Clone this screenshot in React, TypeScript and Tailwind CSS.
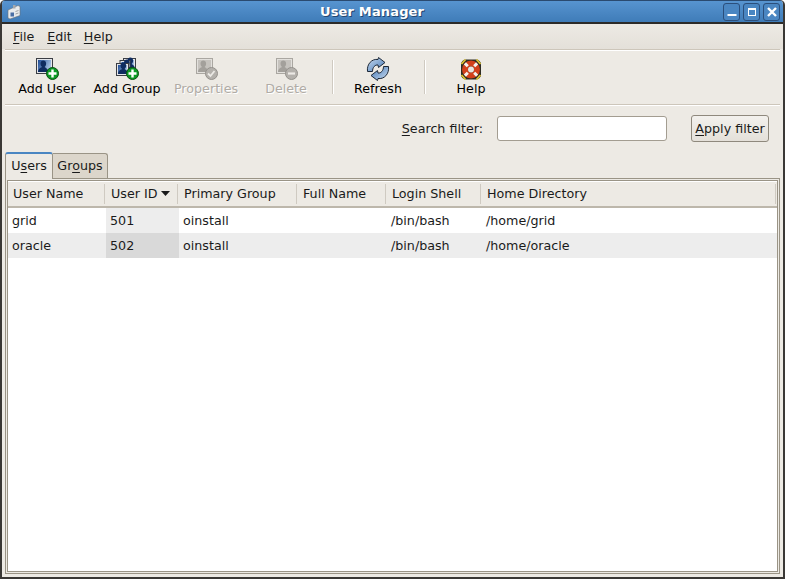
import React from "react";

const columns = [
  { label: "User Name", w: "w-[98px]" },
  { label: "User ID", w: "w-[73px]", sorted: true },
  { label: "Primary Group", w: "w-[119px]" },
  { label: "Full Name", w: "w-[89px]" },
  { label: "Login Shell", w: "w-[95px]" },
  { label: "Home Directory", w: "flex-1" },
];

const rows = [
  ["grid", "501", "oinstall", "", "/bin/bash", "/home/grid"],
  ["oracle", "502", "oinstall", "", "/bin/bash", "/home/oracle"],
];

function Mnemonic({ text, at }: { text: string; at: number }) {
  return (
    <span>
      {text.slice(0, at)}
      <span className="underline underline-offset-2">{text[at]}</span>
      {text.slice(at + 1)}
    </span>
  );
}

function Card({ gray, x = 0, y = 0, w = 16, h = 15 }: { gray?: boolean; x?: number; y?: number; w?: number; h?: number }) {
  return (
    <g transform={`translate(${x} ${y})`}>
      <rect x="0.500" y="0.500" width={w} height={h} fill={gray ? "#e2e0dc" : "#e4e6ea"} stroke={gray ? "#aaa7a1" : "#3b3e44"} />
      <rect x="2" y="2" width={w - 3} height={h - 3} fill={gray ? "#c6c3be" : "url(#cardBlue)"} />
      <path
        d={`M2 ${h - 1}c0-3 2-4 4-5-1-1-1.500-2-1.500-3.500 0-2 1.200-3 2.800-3s2.800 1 2.800 3c0 1.500-.5 2.500-1.500 3.500 1.500 1 3.400 2 3.400 5z`}
        fill={gray ? "#a3a09b" : "#0f2c60"}
      />
    </g>
  );
}

function Badge({ gray, kind }: { gray?: boolean; kind: "plus" | "check" | "minus" }) {
  return (
    <g>
      <circle cx="17.500" cy="16.500" r="6" fill={gray ? "#b4b1ac" : "#0c9a24"} stroke={gray ? "#94918c" : "#0a4f12"} />
      {kind === "plus" && <path d="M17.500 12.500v8M13.500 16.500h8" stroke="#fff" strokeWidth="2.400" />}
      {kind === "check" && <path d="M14 16.500l2.500 2.500 4-5" stroke="#eceae6" strokeWidth="1.800" fill="none" />}
      {kind === "minus" && <path d="M14 16.500h7" stroke="#eceae6" strokeWidth="2.200" />}
    </g>
  );
}

function UserIcon({ kind, gray, group }: { kind: "plus" | "check" | "minus"; gray?: boolean; group?: boolean }) {
  return (
    <svg width="24" height="24" viewBox="0 0 24 24" className="block">
      <defs>
        <linearGradient id="cardBlue" x1="0" y1="0" x2="1" y2="0.400">
          <stop offset="0" stopColor="#1c4a94" />
          <stop offset="1" stopColor="#a9c3e4" />
        </linearGradient>
      </defs>
      {group ? (
        <>
          <Card x={8} y={1} w={12} h={12} />
          <Card x={4.500} y={3} w={10} h={12} />
          <Card x={1} y={6} w={12} h={12} />
        </>
      ) : (
        <Card gray={gray} x={gray ? 2 : 1} y={1} />
      )}
      <Badge gray={gray} kind={kind} />
    </svg>
  );
}

function RefreshIcon() {
  const arrow = "M1.500 14.500C0.500 7 6 1.500 12 2.500L12.500 0.500 19 5.500 12.500 10.500 12 8C9 7.500 6.500 10.500 6.500 14.500Z";
  return (
    <svg width="24" height="24" viewBox="0 0 24 24" className="block">
      <defs>
        <linearGradient id="arrowBlue" x1="0" y1="0" x2="1" y2="1">
          <stop offset="0" stopColor="#cfe0f2" />
          <stop offset="1" stopColor="#3f74b4" />
        </linearGradient>
      </defs>
      <path d={arrow} fill="url(#arrowBlue)" stroke="#1c2838" strokeLinejoin="round" />
      <path d={arrow} transform="rotate(180 12 12)" fill="url(#arrowBlue)" stroke="#1c2838" strokeLinejoin="round" />
    </svg>
  );
}

function HelpIcon() {
  return (
    <svg width="24" height="24" viewBox="0 0 24 24" className="block">
      <rect x="2" y="2.500" width="20" height="20" rx="5" fill="#2e2c22" />
      <path d="M2.500 7l4-4.500M21.500 7l-4-4.500M2.500 18l4 4.500M21.500 18l-4 4.500" stroke="#dcc22c" strokeWidth="1.800" />
      <circle cx="12" cy="12.500" r="6" fill="none" stroke="#d2401a" strokeWidth="6" />
      <path
        d="M8.800 9.300L5.900 6.400M15.200 9.300l2.900-2.900M8.800 15.700l-2.900 2.900M15.200 15.700l2.900 2.900"
        stroke="#f5f2ed"
        strokeWidth="3"
      />
      <circle cx="12" cy="12.500" r="3" fill="#e9e6e0" />
    </svg>
  );
}

function ToolButton({
  label,
  icon,
  width,
  disabled,
}: {
  label: string;
  icon: React.ReactNode;
  width: string;
  disabled?: boolean;
}) {
  return (
    <div className={`${width} flex flex-col items-center shrink-0`}>
      <div className="h-[24px] w-[24px]">{icon}</div>
      <div
        className={`text-[12.700px] leading-[16px] whitespace-nowrap ${
          disabled ? "text-[#b0aca6] [text-shadow:1px_1px_0_#fff]" : "text-black"
        }`}
      >
        {label}
      </div>
    </div>
  );
}

function WinButton({ children }: { children: React.ReactNode }) {
  return (
    <div className="w-[17px] h-[18px] rounded-[3px] border border-[#2b4f7c] bg-[#4a86c2] flex items-center justify-center">
      <svg width="12" height="12" viewBox="0 0 12 12" className="block">
        {children}
      </svg>
    </div>
  );
}

export default function App() {
  return (
    <div
      className="w-[785px] h-[579px] overflow-hidden flex flex-col bg-[#edeae4] text-[12.700px] text-[#1a1a1a] border-x-2 border-b-2 border-[#3a3835] rounded-t-[5px]"
      style={{ fontFamily: '"DejaVu Sans", sans-serif' }}
    >
      {/* title bar */}
      <div className="relative -mx-[2px] h-[24px] shrink-0 flex items-center bg-gradient-to-b from-[#5794d0] to-[#3f7cb8] border-t border-b-2 border-t-[#2a4a70] border-b-[#2c2b29]">
        <svg width="16" height="16" viewBox="0 0 16 16" className="block ml-[6px]">
          <path d="M2 6l10-4.500 2 1v9l-10 3.500-2-1z" fill="#e8ebed" stroke="#6a6f75" strokeWidth="0.600" />
          <rect x="4.500" y="8.500" width="3.500" height="4" fill="#4a6fa5" />
          <path d="M9.500 7.500l3-1M9.500 10l3-1" stroke="#8a8d90" strokeWidth="0.800" />
          <rect x="7" y="1" width="2.500" height="3.500" fill="#a5a8ab" />
        </svg>
        <div className="absolute left-[320px] top-[3px] text-white font-bold text-[13px] leading-[16px] tracking-[0.150px] [text-shadow:1px_1px_0_#23476f]">
          User Manager
        </div>
        <div className="ml-auto mr-[5px] flex gap-[3px]">
          <WinButton>
            <rect x="1.500" y="8" width="9" height="2" fill="#fff" />
          </WinButton>
          <WinButton>
            <rect x="2.500" y="2.500" width="7" height="7" fill="none" stroke="#fff" />
            <rect x="2" y="2" width="8" height="2" fill="#fff" />
          </WinButton>
          <WinButton>
            <path d="M2 2l8 8M10 2l-8 8" stroke="#fff" strokeWidth="2.400" />
          </WinButton>
        </div>
      </div>

      {/* menu bar */}
      <div className="h-[25px] shrink-0 flex items-center pl-[11px] pt-[1px] bg-gradient-to-b from-[#edeae4] to-[#e4e0d9]">
        <span className="mr-[13px]">
          <Mnemonic text="File" at={0} />
        </span>
        <span className="mr-[12px]">
          <Mnemonic text="Edit" at={0} />
        </span>
        <Mnemonic text="Help" at={0} />
      </div>
      <div className="mx-[3px] h-[2px] shrink-0 bg-[#cdc6ba] border-b border-white" />

      {/* toolbar */}
      <div className="h-[53px] shrink-0 flex items-start pt-[6px] pl-[7px]">
        <ToolButton label="Add User" width="w-[76px]" icon={<UserIcon kind="plus" />} />
        <ToolButton label="Add Group" width="w-[84px]" icon={<UserIcon kind="plus" group />} />
        <ToolButton label="Properties" width="w-[74px]" disabled icon={<UserIcon kind="check" gray />} />
        <ToolButton label="Delete" width="w-[86px]" disabled icon={<UserIcon kind="minus" gray />} />
        <div className="w-[2px] h-[34px] mt-[3px] ml-[3px] mr-[2px] bg-[#cfcac1] border-r border-white" />
        <ToolButton label="Refresh" width="w-[84px]" icon={<RefreshIcon />} />
        <div className="w-[2px] h-[34px] mt-[3px] ml-[4px] mr-[2px] bg-[#cfcac1] border-r border-white" />
        <ToolButton label="Help" width="w-[86px]" icon={<HelpIcon />} />
      </div>
      <div className="mx-[3px] h-[2px] shrink-0 bg-[#cdc6ba] border-b border-white" />

      {/* search row */}
      <div className="h-[45px] shrink-0 flex items-center justify-end pr-[14px]">
        <label className="mr-[14px]">
          <Mnemonic text="Search filter:" at={0} />
        </label>
        <div className="w-[170px] h-[25px] bg-white border border-[#a39d91] rounded-[3px] mr-[24px]" />
        <button className="w-[78px] h-[27px] rounded-[3px] border border-[#8f897d] bg-gradient-to-b from-[#f3f1ed] to-[#e4e0d9]">
          <Mnemonic text="Apply filter" at={0} />
        </button>
      </div>

      {/* tabs */}
      <div className="flex items-end h-[27px] shrink-0 pl-[3px]">
        <div className="w-[48px] h-[27px] -mb-[1px] z-10 bg-[#edeae4] rounded-t-[3px] border-x border-[#9a9486] border-t-2 border-t-[#4a86c2] flex items-center justify-center pb-[1px]">
          <Mnemonic text="Users" at={1} />
        </div>
        <div className="w-[55px] h-[25px] bg-[#dcd6cb] rounded-tr-[3px] border-r border-t border-[#9a9486] flex items-center justify-center">
          <Mnemonic text="Groups" at={2} />
        </div>
      </div>

      {/* list */}
      <div className="flex-1 min-h-0 mx-[3px] mb-[3px] border border-[#9a9486] bg-[#edeae4] p-[1px]">
        <div className="h-full border border-[#9a9486] bg-white flex flex-col overflow-hidden">
          <div className="flex h-[27px] shrink-0 bg-[#edeae4] border-b-2 border-b-[#bdb7ab] border-t border-t-white">
            {columns.map((col, i) => (
              <div
                key={col.label}
                className={`${col.w} flex items-center pl-[5px] pr-[1px] ${
                  i < columns.length - 1 ? "shrink-0" : ""
                }`}
              >
                <div className="flex-1 flex items-center gap-[4px]">
                  <span>{col.label}</span>
                  {col.sorted && (
                    <svg width="9" height="5" viewBox="0 0 9 5" className="block">
                      <path d="M0 0h9L4.500 5z" fill="#1a1a1a" />
                    </svg>
                  )}
                </div>
                <div className="w-[1px] h-[20px] bg-[#cfcac1]" />
              </div>
            ))}
          </div>
          {rows.map((row, r) => (
            <div key={row[0]} className={`flex h-[25px] shrink-0 items-center ${r % 2 ? "bg-[#ededed]" : "bg-white"}`}>
              {row.map((cell, i) => (
                <div
                  key={i}
                  className={`${columns[i].w} h-full flex items-center pl-[4px] ${
                    i === 1 ? (r % 2 ? "bg-[#d9d9d9]" : "bg-[#ededed]") : ""
                  }`}
                >
                  {cell}
                </div>
              ))}
            </div>
          ))}
        </div>
      </div>
    </div>
  );
}
